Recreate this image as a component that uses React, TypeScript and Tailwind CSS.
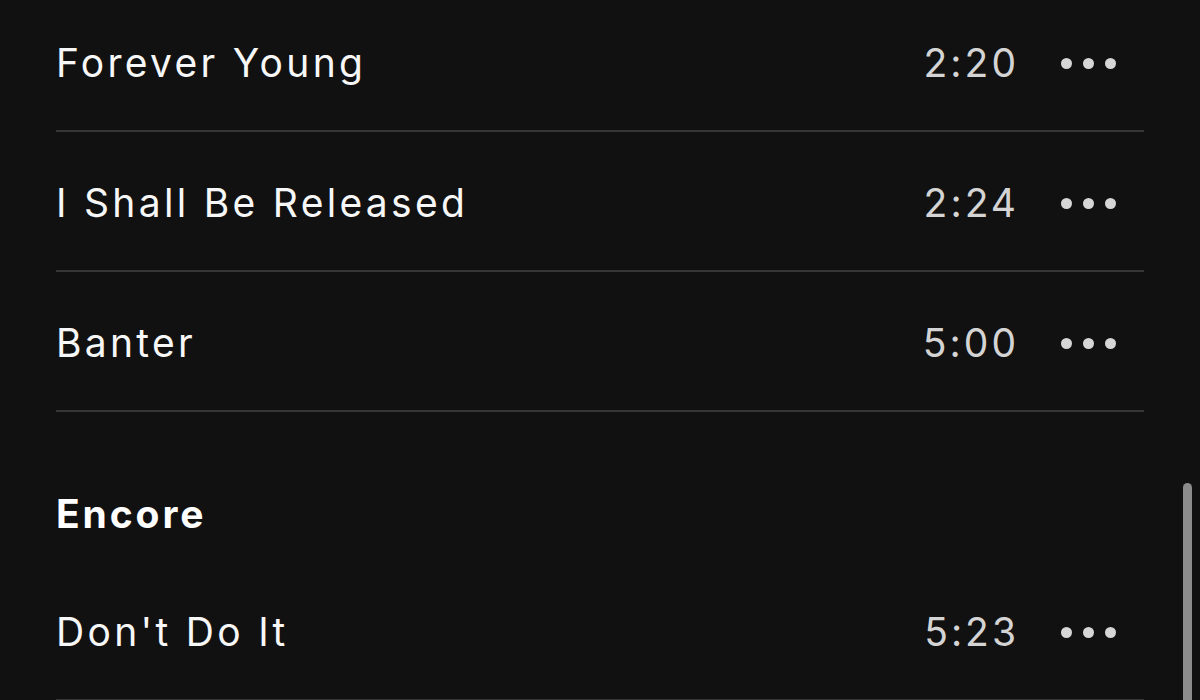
type Track = { title: string; duration: string };

const setOne: Track[] = [
  { title: 'Forever Young', duration: '2:20' },
  { title: 'I Shall Be Released', duration: '2:24' },
  { title: 'Banter', duration: '5:00' },
];

const encore: Track[] = [{ title: "Don't Do It", duration: '5:23' }];

const font = { fontFamily: 'Inter, "Open Sans", sans-serif' };

const MoreDots = () => (
  <div className="flex items-center gap-[11px]">
    <span className="h-[11px] w-[11px] rounded-full bg-[#d6d6d6]" />
    <span className="h-[11px] w-[11px] rounded-full bg-[#d6d6d6]" />
    <span className="h-[11px] w-[11px] rounded-full bg-[#d6d6d6]" />
  </div>
);

const TrackRow = ({ track }: { track: Track }) => (
  <li className="flex h-[140px] items-center border-b-2 border-[#363636] pt-[4px]">
    <span className="flex-1 text-[39px] tracking-[3.3px] text-[#f7f7f7]">{track.title}</span>
    <span className="text-[39px] tracking-[3px] text-[#d4d4d4]">{track.duration}</span>
    <div className="ml-[42px] mr-[28px]">
      <MoreDots />
    </div>
  </li>
);

export default function App() {
  return (
    <div className="relative h-[700px] w-[1200px] overflow-hidden bg-[#111111]" style={font}>
      <div className="ml-[56px] -mt-[8px] w-[1088px]">
        <ul>
          {setOne.map((t) => (
            <TrackRow key={t.title} track={t} />
          ))}
        </ul>
        <h2 className="mt-[82px] mb-[28px] text-[39px] font-bold tracking-[2.9px] text-white leading-none">Encore</h2>
        <ul>
          {encore.map((t) => (
            <TrackRow key={t.title} track={t} />
          ))}
        </ul>
      </div>
      <div className="absolute left-[1183px] top-[483px] h-[240px] w-[9px] rounded-full bg-[#8c8c8c]" />
    </div>
  );
}
